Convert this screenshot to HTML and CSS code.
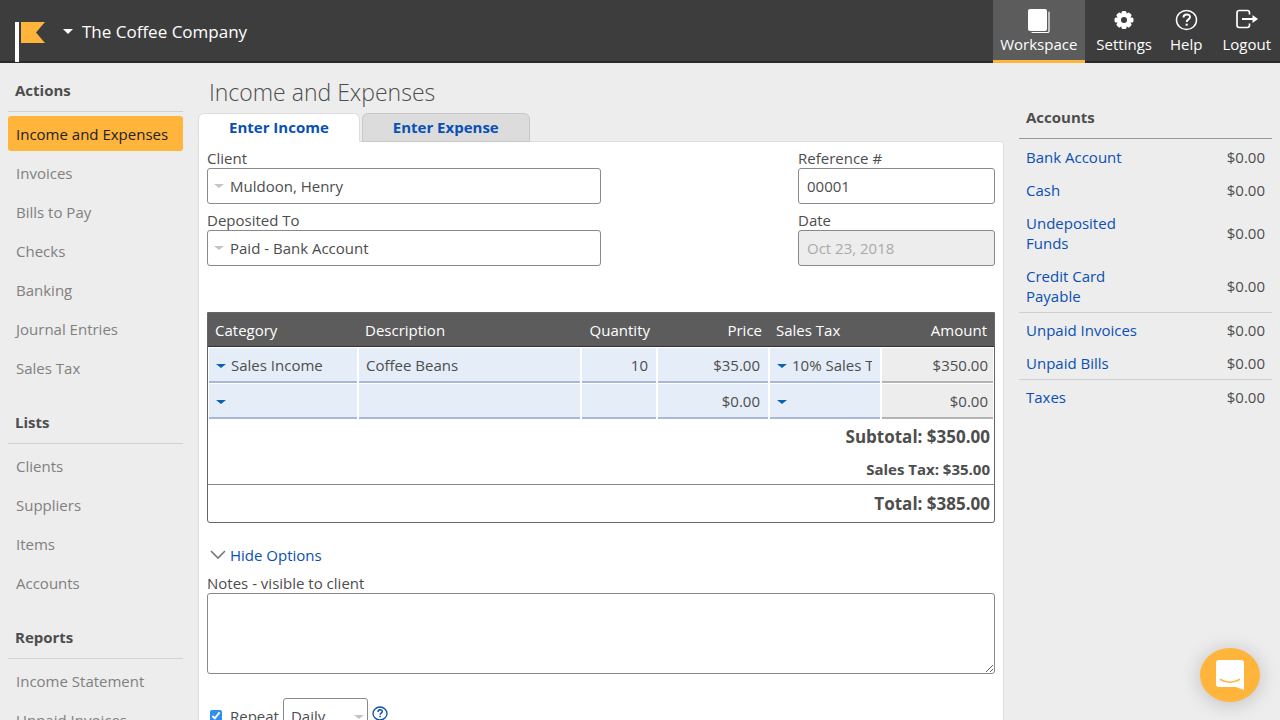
FILE: index.html
```html
<!DOCTYPE html>
<html lang="en">
<head>
<meta charset="utf-8">
<meta name="viewport" content="width=device-width, initial-scale=1">
<title>Income and Expenses</title>
<link rel="stylesheet" href="styles.css">
</head>
<body>
<div class="app">
  <header class="topbar">
    <svg class="logo" width="32" height="42" viewBox="0 0 32 42" aria-hidden="true"><path d="M0 2h4v40H0z" fill="#fff"/><path d="M6 2h24l-9 10.500L30 23H6z" fill="#ffb43b"/></svg>
    <button class="company" type="button"><span class="caret"></span>The Coffee Company</button>
    <nav class="topnav" aria-label="Main">
      <a class="topnav-item current" href="#">
        <svg width="24" height="26" viewBox="0 0 24 26" aria-hidden="true"><rect x="1" y="2" width="19" height="22" rx="2" fill="#fff"/><path d="M22 5v19a1.500 1.500 0 0 1-1.500 1.500H5" fill="none" stroke="#fff" stroke-width="1.200" stroke-linecap="round"/></svg>
        <span>Workspace</span></a>
      <a class="topnav-item" href="#">
        <svg width="24" height="26" viewBox="0 0 24 26" aria-hidden="true"><g fill="#fff"><rect x="9.500" y="4" width="5" height="18" rx="1.500"/><rect x="2.500" y="10.500" width="19" height="5" rx="1.500"/><g transform="rotate(45 12 13)"><rect x="9.500" y="4" width="5" height="18" rx="1.500"/><rect x="3" y="10.500" width="18" height="5" rx="1.500"/></g><circle cx="12" cy="13" r="7"/></g><circle cx="12" cy="13" r="3" fill="#3d3d3d"/></svg>
        <span>Settings</span></a>
      <a class="topnav-item" href="#">
        <svg width="24" height="26" viewBox="0 0 24 26" fill="none" stroke="#fff" aria-hidden="true"><ellipse cx="12.500" cy="13" rx="10" ry="9.500" stroke-width="1.500"/><path d="M9.500 10.500c0-4 6.500-4 6.500-.500 0 2.500-3.300 2.300-3.300 5" stroke-width="1.900"/><path d="M11.600 17.700h2.200" stroke-width="2"/></svg>
        <span>Help</span></a>
      <a class="topnav-item logout" href="#">
        <svg width="24" height="26" viewBox="0 0 24 26" fill="none" stroke="#fff" aria-hidden="true"><path d="M14.500 7.500V5.700a2.200 2.200 0 0 0-2.200-2.200H4.200A2.200 2.200 0 0 0 2 5.700v12.600A2.200 2.200 0 0 0 4.200 20.500h8.100a2.200 2.200 0 0 0 2.200-2.200V16.500" stroke-width="1.700"/><path d="M7 12h12" stroke-width="2"/><path d="M17.500 8v8l5.500-4z" fill="#fff" stroke="none"/></svg>
        <span>Logout</span></a>
    </nav>
  </header>

  <div class="columns">
    <aside class="sidebar">
      <section class="menu">
        <h2 class="menu-title">Actions</h2>
        <ul class="menu-list">
          <li><a class="menu-link active" href="#">Income and Expenses</a></li>
          <li><a class="menu-link" href="#">Invoices</a></li>
          <li><a class="menu-link" href="#">Bills to Pay</a></li>
          <li><a class="menu-link" href="#">Checks</a></li>
          <li><a class="menu-link" href="#">Banking</a></li>
          <li><a class="menu-link" href="#">Journal Entries</a></li>
          <li><a class="menu-link" href="#">Sales Tax</a></li>
        </ul>
      </section>
      <section class="menu">
        <h2 class="menu-title">Lists</h2>
        <ul class="menu-list">
          <li><a class="menu-link" href="#">Clients</a></li>
          <li><a class="menu-link" href="#">Suppliers</a></li>
          <li><a class="menu-link" href="#">Items</a></li>
          <li><a class="menu-link" href="#">Accounts</a></li>
        </ul>
      </section>
      <section class="menu">
        <h2 class="menu-title">Reports</h2>
        <ul class="menu-list">
          <li><a class="menu-link" href="#">Income Statement</a></li>
          <li><a class="menu-link" href="#">Unpaid Invoices</a></li>
        </ul>
      </section>
    </aside>

    <main class="content">
      <h1 class="page-title">Income and Expenses</h1>
      <div class="tabs" role="tablist">
        <button class="tab selected" type="button" role="tab" aria-selected="true">Enter Income</button>
        <button class="tab" type="button" role="tab" aria-selected="false">Enter Expense</button>
      </div>
      <form class="panel">
        <div class="fields">
          <div class="field">
            <label for="client">Client</label>
            <div class="select-box"><select class="control" id="client"><option>Muldoon, Henry</option></select></div>
          </div>
          <div class="field">
            <label for="reference">Reference #</label>
            <input class="control" id="reference" type="text" value="00001">
          </div>
          <div class="field">
            <label for="deposited">Deposited To</label>
            <div class="select-box"><select class="control" id="deposited"><option>Paid - Bank Account</option></select></div>
          </div>
          <div class="field">
            <label for="date">Date</label>
            <input class="control" id="date" type="text" value="Oct 23, 2018" disabled>
          </div>
        </div>

        <div class="items-frame">
          <table class="items">
            <colgroup><col class="col-category"><col><col class="col-quantity"><col class="col-money"><col class="col-money"><col class="col-amount"></colgroup>
            <thead>
              <tr><th>Category</th><th>Description</th><th class="num">Quantity</th><th class="num">Price</th><th>Sales Tax</th><th class="num">Amount</th></tr>
            </thead>
            <tbody>
              <tr>
                <td><div class="cell-select"><select class="cell" aria-label="Category"><option>Sales Income</option></select></div></td>
                <td><input class="cell" type="text" aria-label="Description" value="Coffee Beans"></td>
                <td><input class="cell num" type="text" aria-label="Quantity" value="10"></td>
                <td><input class="cell num" type="text" aria-label="Price" value="$35.00"></td>
                <td><div class="cell-select"><select class="cell" aria-label="Sales tax"><option>10% Sales Tax</option></select></div></td>
                <td><div class="cell amount">$350.00</div></td>
              </tr>
              <tr>
                <td><div class="cell-select"><select class="cell" aria-label="Category"><option></option></select></div></td>
                <td><input class="cell" type="text" aria-label="Description"></td>
                <td><input class="cell num" type="text" aria-label="Quantity"></td>
                <td><input class="cell num" type="text" aria-label="Price" value="$0.00"></td>
                <td><div class="cell-select"><select class="cell" aria-label="Sales tax"><option></option></select></div></td>
                <td><div class="cell amount">$0.00</div></td>
              </tr>
            </tbody>
          </table>
          <p class="sum large">Subtotal: $350.00</p>
          <p class="sum">Sales Tax: $35.00</p>
          <p class="sum large total">Total: $385.00</p>
        </div>

        <button class="options-toggle" type="button"><svg width="16" height="10" viewBox="0 0 16 10" fill="none" stroke="#777" stroke-width="1.600" aria-hidden="true"><path d="M1 1l7 7 7-7"/></svg>Hide Options</button>
        <div class="field">
          <label for="notes">Notes - visible to client</label>
          <textarea class="notes" id="notes"></textarea>
        </div>
        <div class="repeat">
          <input class="check" id="repeat" type="checkbox" checked>
          <label for="repeat">Repeat</label>
          <div class="period-box"><select class="control period" aria-label="Repeat period"><option>Daily</option></select></div>
          <button class="hint" type="button" aria-label="About repeating"><svg width="16" height="16" viewBox="0 0 16 16" fill="none" stroke="#0a50b4" aria-hidden="true"><ellipse cx="8" cy="7.500" rx="7" ry="6.500" stroke-width="1.300"/><path d="M6 6c0-3 4.300-3 4.300-.500 0 1.800-2.200 1.500-2.200 3.300" stroke-width="1.400"/><path d="M7.300 10.500h1.500" stroke-width="1.500"/></svg></button>
        </div>
      </form>
    </main>

    <aside class="accounts">
      <h2 class="accounts-title">Accounts</h2>
      <table class="balances">
        <tbody>
          <tr><td><a href="#">Bank Account</a></td><td>$0.00</td></tr>
          <tr><td><a href="#">Cash</a></td><td>$0.00</td></tr>
          <tr><td><a href="#">Undeposited Funds</a></td><td>$0.00</td></tr>
          <tr><td><a href="#">Credit Card Payable</a></td><td>$0.00</td></tr>
        </tbody>
        <tbody>
          <tr><td><a href="#">Unpaid Invoices</a></td><td>$0.00</td></tr>
          <tr><td><a href="#">Unpaid Bills</a></td><td>$0.00</td></tr>
        </tbody>
        <tbody>
          <tr><td><a href="#">Taxes</a></td><td>$0.00</td></tr>
        </tbody>
      </table>
    </aside>
  </div>

  <button class="chat" type="button" aria-label="Open chat"><svg width="28" height="30" viewBox="0 0 28 30" aria-hidden="true"><path d="M3 0h22a3 3 0 0 1 3 3v27l-8-3H3a3 3 0 0 1-3-3V3a3 3 0 0 1 3-3z" fill="#fff"/><path d="M4.500 19.500q9.500 5.500 19 0" fill="none" stroke="#ffb43b" stroke-width="1.500" stroke-linecap="round"/></svg></button>
</div>
</body>
</html>
```
FILE: styles.css
```css
* { box-sizing: border-box; }

html { scrollbar-width: none; }

body {
  margin: 0;
  background: #ededed;
  color: #4d4d4d;
  font: 15px/20px "Open Sans", "Noto Sans", sans-serif;
}

h1, h2, p, ul { margin: 0; padding: 0; }
ul { list-style: none; }
a { color: #0a50b4; text-decoration: none; }
button, input, select, textarea { font: inherit; color: inherit; }
button { border: 0; padding: 0; background: none; cursor: pointer; }

.app { height: 100vh; display: flex; flex-direction: column; }

/* Top bar */
.topbar {
  flex: none;
  height: 63px;
  display: flex;
  align-items: stretch;
  padding-left: 15px;
  background: #3d3d3d;
  border-bottom: 2px solid #2a2a2a;
  color: #fff;
}
.logo { flex: none; margin-top: 20px; }
.company {
  display: flex;
  align-items: center;
  gap: 9px;
  padding: 2px 0 0 16px;
  color: #fff;
  font-size: 17px;
}
.caret { border: 5px solid transparent; border-top-color: #fff; border-bottom: 0; }
.topnav { display: flex; margin-left: auto; }
.topnav-item {
  height: 63px;
  display: flex;
  flex-direction: column;
  align-items: center;
  gap: 1px;
  padding: 7px 9px 0;
  color: #fff;
}
.topnav-item.current {
  background: #5c5c5c;
  border-bottom: 3px solid #ffb43b;
  padding: 7px 8px 0 7px;
}
.topnav-item.current + .topnav-item,
.topnav-item.logout { padding-left: 11px; }

/* Columns */
.columns {
  flex: 1;
  min-height: 0;
  display: grid;
  grid-template-columns: 198px minmax(0, 1fr) 276px;
  overflow-y: auto;
  scrollbar-width: none;
}

.sidebar { padding: 0 15px 20px 8px; }
.menu { margin-bottom: 10px; }
.menu-title {
  padding: 17px 7px 11px;
  border-bottom: 1px solid #d2d2d2;
  font-size: 15px;
  line-height: 20px;
}
.menu-list { display: grid; gap: 4px; padding-top: 4px; }
.menu-link {
  display: block;
  padding: 8px 8px 7px;
  border-radius: 3px;
  color: #808080;
}
.menu-link.active { background: #ffb43b; color: #222; }

/* Main panel */
.content { display: flex; flex-direction: column; min-height: 729px; }
.page-title {
  padding: 14px 11px 6px;
  font-size: 23px;
  font-weight: 300;
  line-height: 30px;
}
.tabs { display: flex; gap: 2px; margin-bottom: -1px; }
.tab {
  position: relative;
  height: 29px;
  padding: 0 30px 1px;
  background: #dcdcdc;
  border: 1px solid #c8c8c8;
  border-radius: 6px 6px 0 0;
  color: #0a50b4;
  font-weight: 700;
}
.tab.selected { background: #fff; border-color: #ddd; border-bottom-color: #fff; }
.panel {
  flex: 1;
  padding: 7px 8px 20px;
  background: #fff;
  border: 1px solid #ddd;
  border-top-right-radius: 3px;
}
.fields {
  display: grid;
  grid-template-columns: 2fr 1fr;
  column-gap: 197px;
  row-gap: 7px;
}
.field { display: flex; flex-direction: column; }
.field label { line-height: 19px; }
.control {
  display: block;
  width: 100%;
  height: 36px;
  padding: 0 8px;
  background: #fff;
  border: 1px solid #8a8a8a;
  border-radius: 3px;
  appearance: none;
}
.control:disabled { background: #ededed; color: #aaa; }
.select-box, .cell-select, .period-box { position: relative; }
.select-box .control { padding-left: 22px; }
.select-box::before, .cell-select::before, .period-box::before {
  content: "";
  position: absolute;
  top: 16px;
  left: 7px;
  border: 5px solid transparent;
  border-top: 4px solid #c4c4c4;
  border-bottom: 0;
  pointer-events: none;
}

/* Line items */
.items-frame {
  margin-top: 46px;
  border: 1px solid #666;
  border-radius: 0 0 3px 3px;
}
.items { width: 100%; table-layout: fixed; border-collapse: collapse; }
.col-category { width: 150px; }
.col-quantity { width: 76px; }
.col-money { width: 112px; }
.col-amount { width: 113px; }
.items th {
  height: 33px;
  padding: 1px 7px 0;
  background: #5c5c5c;
  border-bottom: 1px solid #333;
  color: #fff;
  font-weight: 400;
  text-align: left;
}
.items .num { text-align: right; }
.items td { height: 36px; padding: 1px 1px 0; }
.cell {
  display: block;
  width: 100%;
  height: 35px;
  padding: 1px 8px 0 7px;
  background: #e5eef8;
  border: 0;
  border-bottom: 2px solid #a8b8da;
  border-radius: 0;
  appearance: none;
}
.cell-select::before { top: 16px; border-top-color: #0a62b4; }
.cell-select .cell { padding-left: 22px; }
.cell.amount {
  padding-right: 5px;
  background: #ededed;
  border-color: #b4b4b4;
  line-height: 33px;
  text-align: right;
}
.sum { padding: 4px 4px 5px; font-weight: 700; text-align: right; }
.sum.large { padding: 8px 4px; font-size: 17px; }
.sum.total { padding: 9px 4px 8px; border-top: 1px solid #888; }

.options-toggle {
  display: flex;
  align-items: center;
  gap: 4px;
  margin: 22px 0 9px 3px;
  color: #0a50b4;
}
.notes {
  display: block;
  width: 100%;
  height: 81px;
  border: 1px solid #8a8a8a;
  border-radius: 3px;
  resize: vertical;
}
.repeat { display: flex; align-items: center; margin-top: 24px; }
.check { width: 12px; height: 12px; margin: 0 8px 0 3px; accent-color: #2f8ff0; }
.period-box { margin: 0 4px; }
.period-box .period { width: 85px; padding-left: 7px; }
.period-box::before { left: auto; right: 4px; top: 17px; }
.hint { align-self: flex-start; margin-top: 8px; line-height: 0; }

/* Accounts */
.accounts { padding: 44px 8px 20px 15px; }
.accounts-title {
  padding: 0 7px 11px;
  border-bottom: 1px solid #999;
  font-size: 15px;
  line-height: 20px;
}
.balances {
  width: 100%;
  margin-top: 1px;
  border-collapse: collapse;
  table-layout: fixed;
}
.balances td { width: 50%; padding: 7px 7px 6px; }
.balances td:last-child { text-align: right; }
.balances tbody + tbody { border-top: 1px solid #cfcfcf; }

.chat {
  position: fixed;
  right: 20px;
  bottom: 18px;
  width: 60px;
  height: 54px;
  display: grid;
  place-items: center;
  background: #ffb43b;
  border-radius: 50%;
  box-shadow: 0 2px 20px rgba(0, 0, 0, 0.2);
}
```
